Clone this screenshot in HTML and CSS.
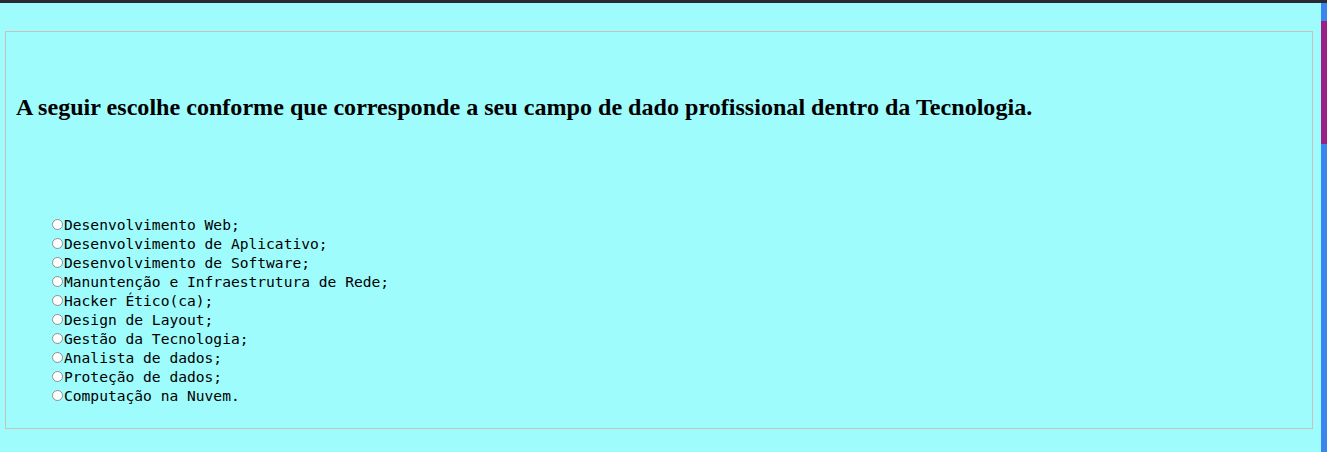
FILE: index.html
```html
<!DOCTYPE html>
<html lang="pt-BR">
<head>
<meta charset="utf-8">
<title>Campo profissional</title>
<link rel="stylesheet" href="styles.css">
</head>
<body>
<div class="topbar"></div>
<div class="frame">
  <main class="page">
    <section class="box">
      <h2 class="question">A seguir escolhe conforme que corresponde a seu campo de dado profissional dentro da Tecnologia.</h2>
      <ul class="options">
        <li><span class="radio"></span>Desenvolvimento Web;</li>
        <li><span class="radio"></span>Desenvolvimento de Aplicativo;</li>
        <li><span class="radio"></span>Desenvolvimento de Software;</li>
        <li><span class="radio"></span>Manuntenção e Infraestrutura de Rede;</li>
        <li><span class="radio"></span>Hacker Ético(ca);</li>
        <li><span class="radio"></span>Design de Layout;</li>
        <li><span class="radio"></span>Gestão da Tecnologia;</li>
        <li><span class="radio"></span>Analista de dados;</li>
        <li><span class="radio"></span>Proteção de dados;</li>
        <li><span class="radio"></span>Computação na Nuvem.</li>
      </ul>
    </section>
  </main>
  <div class="scrollbar"><div class="track-top"></div><div class="thumb"></div><div class="track-rest"></div></div>
</div>
</body>
</html>
```
FILE: styles.css
```css
html, body {
  margin: 0;
  padding: 0;
  height: 100%;
  overflow: hidden;
}
body {
  background: #9ffcfc;
  display: flex;
  flex-direction: column;
}
.topbar {
  height: 3px;
  background: #2b2a33;
  flex: none;
}
.frame {
  flex: 1;
  display: flex;
}
.page {
  flex: 1;
  padding: 28px 8px 0 5px;
}
.scrollbar {
  width: 6px;
  display: flex;
  flex-direction: column;
  background: #3a86f0;
}
.track-top { height: 18px; }
.thumb { height: 123px; background: #9b1f84; }
.track-rest { flex: 1; }
.box {
  border: 1px solid #cbc0c0;
  height: 398px;
  box-sizing: border-box;
  padding: 0 10px;
}
.question {
  font-family: "Liberation Serif", "Times New Roman", serif;
  font-weight: bold;
  font-size: 24.1px;
  line-height: 26px;
  margin: 62px 0 0 0;
  color: #000;
}
.options {
  list-style: none;
  margin: 95px 0 0 0;
  padding: 0 0 0 36px;
  font-family: "DejaVu Sans Mono", "Liberation Mono", monospace;
  font-size: 14.6px;
  line-height: 19px;
  color: #000;
}
.options li {
  display: flex;
  align-items: center;
}
.radio {
  width: 9px;
  height: 9px;
  border: 1px solid #8f8f8f;
  border-radius: 50%;
  background: #fff;
  margin-right: 1px;
  flex: none;
}
```
